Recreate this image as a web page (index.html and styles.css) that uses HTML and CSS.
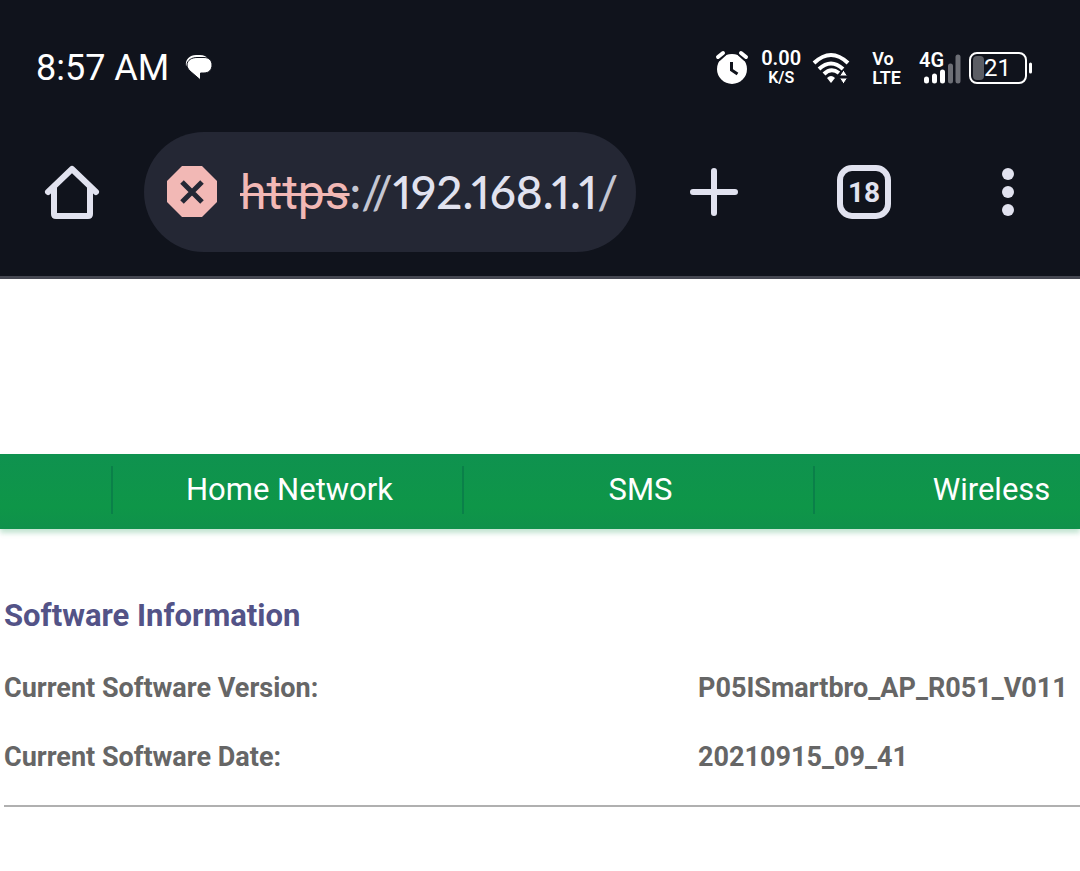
FILE: index.html
```
<!DOCTYPE html>
<html lang="en">
<head>
    <meta charset="UTF-8">
    <meta name="viewport" content="width=device-width, initial-scale=1.0">
    <title>Software Information</title>
    <link rel="stylesheet" href="styles.css">
</head>
<body>

<header class="browser">
    <div class="status-bar">
        <span class="clock">8:57 AM</span>
        <svg class="chat-icon" width="28" height="28" viewBox="0 0 28 28">
            <path d="M1 12C0 5 5 1 11 1h4c4 0 6 1 8 4L6 8z" fill="#fff"/>
            <path d="M12 3.500h7c5 0 8 3 8 7.500s-3 8-8 8h-3.500v7L5 17c-2-2-3-4-3-6 0-5 5-7.500 10-7.500z" fill="#fff" stroke="#10131c" stroke-width="1"/>
        </svg>

        <div class="status-icons">
            <svg width="34" height="36" viewBox="0 0 34 36">
                <circle cx="17" cy="19" r="15" fill="#fff"/>
                <path d="M3 8l5-4.500M31 8l-5-4.500" stroke="#10131c" stroke-width="7" stroke-linecap="round"/>
                <path d="M3 7l5-4M31 7l-5-4" stroke="#fff" stroke-width="4" stroke-linecap="round"/>
                <path d="M16.500 12v8l6 4" fill="none" stroke="#10131c" stroke-width="3"/>
            </svg>
            <div class="speed"><span>0.00</span><small>K/S</small></div>
            <svg class="wifi" width="38" height="32" viewBox="0 0 38 32">
                <g fill="none" stroke="#fff" stroke-width="4">
                    <path d="M1 11Q18-5 35 11"/>
                    <path d="M6 17Q18 6 30 17"/>
                    <path d="M11 22Q18 15 26 21"/>
                </g>
                <path d="M14 26q4-4 8 0l-4 5z" fill="#fff"/>
                <path d="M26.500 24l4-6 4 6zM26.500 26l4 6 4-6z" fill="#fff" stroke="#10131c"/>
            </svg>
            <div class="volte"><span>Vo</span><span>LTE</span></div>
            <svg class="signal" width="42" height="36" viewBox="0 0 42 36">
                <text x="0" y="17" class="signal-text">4G</text>
                <g stroke-width="5" stroke-linecap="round" stroke="#fff">
                    <path d="M7.500 29v2M15.500 26v5M23.500 22v9"/>
                    <path d="M31.500 16v15M39 7v24" stroke="#6d6f76"/>
                </g>
            </svg>
            <svg class="battery" width="64" height="34" viewBox="0 0 64 34">
                <rect x="1" y="2" width="56" height="30" rx="7" fill="none" stroke="#fff" stroke-width="2"/>
                <rect x="4" y="5" width="11" height="24" rx="4" fill="#5b5d64"/>
                <path d="M61.500 13v8" stroke="#fff" stroke-width="3" stroke-linecap="round"/>
                <text x="15" y="25" class="battery-text">21</text>
            </svg>
        </div>
    </div>

    <div class="toolbar">
        <button type="button" aria-label="Home">
            <svg width="56" height="56" viewBox="0 0 56 56" fill="none" stroke="#e1e2ef" stroke-width="6" stroke-linejoin="round" stroke-linecap="round">
                <path d="M4 28L28 5l24 23"/>
                <path d="M10 24v26q0 2 2 2h32q2 0 2-2V24"/>
            </svg>
        </button>
        <div class="address-bar">
            <svg width="52" height="52" viewBox="0 0 52 52">
                <path d="M16 0h20l15 15v21L36 51H16L1 36V15z" fill="#f2b8b5"/>
                <path d="M16 16l20 20M36 16L16 36" stroke="#242734" stroke-width="5"/>
            </svg>
            <div class="url" role="textbox" contenteditable="true" spellcheck="false" aria-label="Address"><s>https</s><span class="dim">://</span>192.168.1.1<span class="dim">/</span></div>
        </div>
        <button type="button" aria-label="New tab">
            <svg width="48" height="48" viewBox="0 0 48 48">
                <path d="M24 3v42M3 24h42" stroke="#e1e2ef" stroke-width="6" stroke-linecap="round"/>
            </svg>
        </button>
        <button type="button" aria-label="Open tabs"><span class="tab-count">18</span></button>
        <button type="button" aria-label="Menu">
            <svg width="12" height="48" viewBox="0 0 12 48" fill="#e1e2ef">
                <circle cx="6" cy="6" r="6"/>
                <circle cx="6" cy="24" r="6"/>
                <circle cx="6" cy="42" r="6"/>
            </svg>
        </button>
    </div>
</header>

<nav class="menu">
    <a href="#network">Home Network</a>
    <a href="#sms">SMS</a>
    <a href="#wireless">Wireless</a>
</nav>

<main class="content">
    <h1>Software Information</h1>
    <table class="info">
        <tr>
            <th scope="row">Current Software Version:</th>
            <td>P05ISmartbro_AP_R051_V011</td>
        </tr>
        <tr>
            <th scope="row">Current Software Date:</th>
            <td>20210915_09_41</td>
        </tr>
    </table>
</main>

</body>
</html>
```
FILE: styles.css
```
* {
    box-sizing: border-box;
}
body {
    margin: 0;
    font-family: Roboto, sans-serif;
    background: #fff;
    color: #666;
    overflow-x: hidden;
}
svg {
    display: block;
    flex-shrink: 0;
    overflow: visible;
}

/* browser chrome */
.browser {
    background: #10131c;
    border-bottom: 3px solid #464852;
    padding-bottom: 24px;
    color: #fff;
}
.status-bar {
    display: flex;
    align-items: center;
    padding: 48px 47px 44px 36px;
}
.clock {
    font-size: 36px;
    line-height: 40px;
}
.chat-icon {
    margin-left: 16px;
}
.status-icons {
    display: flex;
    align-items: center;
    margin-left: auto;
    font-weight: 600;
}
.speed,
.volte {
    display: flex;
    flex-direction: column;
    font-size: 18px;
    line-height: 19px;
}
.speed {
    align-items: center;
    margin: 0 12px;
    font-size: 20px;
}
.speed small {
    font-size: 16px;
}
.volte {
    margin: 0 18px 0 21px;
}
.signal-text {
    font-size: 20px;
    fill: #fff;
}
.battery {
    margin-left: 8px;
}
.battery-text {
    font-size: 24px;
    font-weight: 400;
    fill: #fff;
}
.toolbar {
    display: grid;
    grid-template-columns: 144px 1fr 156px 144px 144px;
}
.toolbar button {
    display: flex;
    align-items: center;
    justify-content: center;
    padding: 0;
    border: none;
    background: none;
    font-family: inherit;
    color: #e1e2ef;
    cursor: pointer;
}
.address-bar {
    display: flex;
    align-items: center;
    gap: 22px;
    min-width: 0;
    height: 120px;
    padding: 0 16px 0 22px;
    border-radius: 60px;
    background: #242734;
}
.url {
    flex: 1;
    overflow: hidden;
    white-space: nowrap;
    font-family: Lato, sans-serif;
    font-size: 46px;
    font-weight: 500;
    line-height: 60px;
    font-variant-numeric: proportional-nums;
    color: #e1e2ef;
    outline: none;
}
.url s {
    font-family: Roboto, sans-serif;
    font-size: 48px;
    font-weight: 400;
    color: #f2b8b5;
    text-decoration-thickness: 3px;
}
.url .dim {
    color: #c4c6d2;
}
.tab-count {
    display: flex;
    align-items: center;
    justify-content: center;
    width: 54px;
    height: 54px;
    border: 6px solid #e1e2ef;
    border-radius: 15px;
    font-size: 28px;
    font-weight: 700;
}

/* router page */
.menu {
    display: flex;
    margin-top: 175px;
    padding: 12px 0 15px 111px;
    overflow: hidden;
    background: linear-gradient(#0f924f, #0e9648 70%, #0f914b);
    box-shadow: 0 4px 5px rgba(15, 146, 77, 0.25);
}
.menu a {
    flex: 0 0 351px;
    padding-left: 4px;
    border-left: 2px solid #0a8049;
    text-align: center;
    font-size: 31px;
    line-height: 48px;
    color: #fff;
    text-decoration: none;
}
.content {
    padding: 65px 0 0 4px;
}
h1 {
    margin: 0 0 29px;
    font-size: 31px;
    line-height: 44px;
    color: #535387;
}
.info {
    width: 100%;
    border-collapse: collapse;
    border-bottom: 2px solid #b0b0b0;
    font-size: 27px;
    line-height: 31px;
}
.info th,
.info td {
    padding: 6px 0 32px;
    text-align: left;
    font-weight: 700;
}
.info th {
    width: 694px;
}
```
